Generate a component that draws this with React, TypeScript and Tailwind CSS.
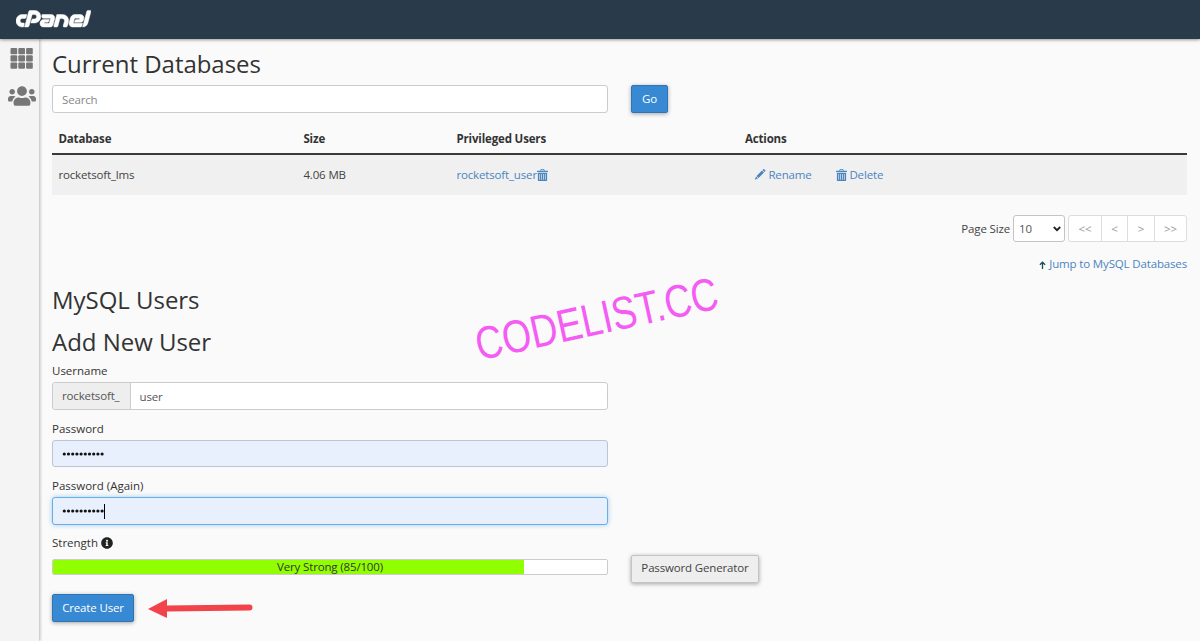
import type { ReactNode } from "react";
import { FaCpanel, FaInfoCircle, FaUsers } from "react-icons/fa";

function Trash() {
  return (
    <svg viewBox="0 0 20 22" className="inline-block h-[12px] w-[11px] shrink-0" fill="currentColor">
      <path d="M7 0h6l1 3h6v2.600H0V3h6zM8 1.500 7.500 3h5L12 1.500zM1.500 7h17v13.500a1.500 1.500 0 0 1-1.500 1.500H3a1.500 1.500 0 0 1-1.500-1.500zM4.300 9v10.500h1.200V9zm3.400 0v10.500h1.200V9zm3.400 0v10.500h1.200V9zm3.400 0v10.500h1.200V9z" fillRule="evenodd" />
    </svg>
  );
}

function Pencil() {
  return (
    <svg viewBox="0 0 22 22" className="inline-block h-[11px] w-[12px] shrink-0" fill="currentColor">
      <path d="M17.500.5a1.500 1.500 0 0 1 2 0l2 2a1.500 1.500 0 0 1 0 2L20 6l-4-4zM15 3l4 4L8 18l-4-4zM3 15l4 4-6.500 2.500z" />
    </svg>
  );
}

function Grid() {
  return (
    <svg viewBox="0 0 23 21" className="h-[21px] w-[23px]" fill="#777">
      {[0, 7.25, 14.5].map((y) =>
        [0.5, 8.3, 16.1].map((x) => <rect key={`${x}-${y}`} x={x} y={y} width="6.700" height="6.300" rx="1" />),
      )}
    </svg>
  );
}

function Heading({ children, className }: { children: ReactNode; className: string }) {
  return <h2 className={`flex h-[42px] items-center text-[24px] tracking-[-0.030px] whitespace-nowrap text-[#333] ${className}`}>{children}</h2>;
}

function Label({ children, className }: { children: ReactNode; className: string }) {
  return <div className={`flex h-[14px] items-center text-[11.500px] font-medium tracking-normal text-[#333] ${className}`}>{children}</div>;
}

function Dots() {
  return (
    <svg viewBox="0 0 42 4" className="h-[4px] w-[42px]" fill="#111">
      {Array.from({ length: 10 }, (_, i) => (
        <circle key={i} cx={2.3 + i * 4.2} cy="2" r="1.600" />
      ))}
    </svg>
  );
}

export default function App() {
  return (
    <div className="flex h-[641px] flex-col overflow-hidden bg-[#fafafa] font-['Open_Sans',sans-serif] text-[11.500px] leading-none tracking-[-0.150px] text-[#444]">
      <header className="z-10 flex h-[39px] shrink-0 items-center bg-[#293a4a] pl-[16px] shadow-[0_1px_3px_rgba(0,0,0,0.4)]">
        <FaCpanel className="mb-[1px] h-[61px] w-[75px] shrink-0 text-white" stroke="white" strokeWidth="4" />
      </header>
      <div className="flex min-h-0 flex-1">
        <aside className="flex w-[39px] shrink-0 flex-col items-end bg-[#f4f4f4] pt-[9px] shadow-[1px_0_3px_rgba(0,0,0,0.28)]">
          <div className="mr-[6px]"><Grid /></div>
          <FaUsers className="mt-[13px] mr-[3px] h-[28px] w-[28px] text-[#777]" />
        </aside>
        <main className="relative min-w-0 flex-1 pt-[4px] pr-[13px] pl-[13px]">
          <Heading className="">Current Databases</Heading>
          <div className="flex h-[28px]">
            <div className="flex w-[556px] items-center rounded-[3px] border border-[#ccc] bg-white pt-[1px] pl-[9px] text-[#888]">Search</div>
            <button className="ml-[23px] w-[37px] rounded-[2px] border border-[#2d75b5] bg-[#3789d3] tracking-[-0.150px] text-white shadow-[0_1px_4px_rgba(0,0,0,0.35)]">Go</button>
          </div>

          <div className="mt-[12px] grid h-[30px] grid-cols-[245px_153px_288.500px_1fr] items-center border-b-2 border-[#3a3a3a] pl-[6.400px] font-bold text-[#333]">
            <div>Database</div>
            <div>Size</div>
            <div>Privileged Users</div>
            <div>Actions</div>
          </div>
          <div className="grid h-[40px] grid-cols-[245px_153px_298px_1fr] items-center bg-[#f0f0f0] pb-[1px] pl-[6.400px]">
            <div>rocketsoft_lms</div>
            <div>4.06 MB</div>
            <div className="flex items-center text-[#4a85bf]">
              rocketsoft_user
              <Trash />
            </div>
            <div className="flex items-center text-[#4a85bf]">
              <Pencil />
              <span className="ml-[2px] w-[68px]">Rename</span>
              <Trash />
              <span className="ml-[2px]">Delete</span>
            </div>
          </div>

          <div className="mt-[20px] flex h-[27px] items-center justify-end text-[#444]">
            <span>Page Size</span>
            <div className="ml-[3px] flex h-[27px] w-[52px] items-center justify-between rounded-[3px] border border-[#c4c4c4] bg-white pr-[3px] pl-[5px] text-[#555]">
              10
              <svg viewBox="0 0 8 6" className="h-[6px] w-[8px]" fill="none" stroke="#222" strokeWidth="1.800">
                <path d="m.8 1 3.200 3.200L7.200 1" />
              </svg>
            </div>
            <div className="ml-[3px] flex h-[27px] w-[119px] divide-x divide-[#ddd] rounded-[3px] border border-[#ddd] bg-white text-[#999]">
              <span className="flex w-[33px] items-center justify-center">&lt;&lt;</span>
              <span className="flex w-[26px] items-center justify-center">&lt;</span>
              <span className="flex w-[27px] items-center justify-center">&gt;</span>
              <span className="flex flex-1 items-center justify-center">&gt;&gt;</span>
            </div>
          </div>
          <div className="mt-[12px] flex h-[20px] items-center justify-end text-[#4a85bf]">
            <svg viewBox="0 0 8 9" className="mt-[2px] mr-[3px] h-[8px] w-[7px]" fill="none" stroke="#17505a" strokeWidth="1.500">
              <path d="M4 9V1.500M1 4.300l3-3 3 3" />
            </svg>
            <span>Jump to MySQL Databases</span>
          </div>

          <Heading className="mt-[5px]">MySQL Users</Heading>
          <Heading className="mt-[1px] pb-[2px]">Add New User</Heading>
          <Label className="">Username</Label>
          <div className="mt-[4px] flex h-[28px] w-[556px] overflow-hidden rounded-[3px] border border-[#ccc] bg-white text-[#555]">
            <div className="flex w-[78px] items-center border-r border-[#ccc] bg-[#eee] pl-[9px]">rocketsoft_</div>
            <div className="flex items-center pt-[1px] pl-[8.500px]">user</div>
          </div>
          <Label className="mt-[11px] pt-[1px]">Password</Label>
          <div className="mt-[5px] flex h-[27px] w-[556px] items-center rounded-[3px] border border-[#bcc5d2] bg-[#e8f0fe] pl-[9px]">
            <Dots />
          </div>
          <Label className="mt-[12px]">Password (Again)</Label>
          <div className="mt-[4px] flex h-[28px] w-[556px] items-center rounded-[3px] border border-[#66afe9] bg-[#e8f0fe] pl-[9px] shadow-[0_0_5px_rgba(102,175,233,0.6)]">
            <Dots />
            <div className="h-[15px] w-px bg-black" />
          </div>
          <Label className="mt-[11px]">
            Strength
            <FaInfoCircle className="ml-[3px] h-[12px] w-[12px] text-[#222]" />
          </Label>
          <div className="mt-[5px] flex h-[28px]">
            <div className="mt-[4px] grid h-[16px] w-[556px] overflow-hidden rounded-[2px] border border-[#ccc] bg-white">
              <div className="col-start-1 row-start-1 w-[85%] bg-[#91ff00]" />
              <div className="col-start-1 row-start-1 flex items-center justify-center text-[#333]">Very Strong (85/100)</div>
            </div>
            <button className="ml-[23px] w-[128px] rounded-[2px] border border-[#c4c4c4] bg-[#eee] pb-[2px] tracking-[-0.150px] text-[#444] shadow-[0_1px_4px_rgba(0,0,0,0.35)]">Password Generator</button>
          </div>
          <button className="mt-[11px] block h-[28px] w-[82px] rounded-[2px] border border-[#2d75b5] bg-[#3789d3] pb-[1px] tracking-[-0.150px] text-white shadow-[0_1px_4px_rgba(0,0,0,0.35)]">Create User</button>

          <svg viewBox="0 0 106 20" className="absolute top-[559px] left-[109px] h-[20px] w-[106px]">
            <path d="M18 10.500 101.500 9.500" stroke="#f2434a" strokeWidth="6" strokeLinecap="round" />
            <path d="M0 11 19 1v19z" fill="#f2434a" />
          </svg>
          <svg viewBox="0 0 280 130" className="absolute top-[221px] left-[421px] h-[130px] w-[280px] overflow-visible">
            <text transform="translate(19.300 100.500) rotate(-12.300)" textLength="247" lengthAdjust="spacingAndGlyphs" className="fill-[#f45cf4] font-['Liberation_Sans',sans-serif] text-[46px] tracking-normal">CODELIST.CC</text>
          </svg>
        </main>
      </div>
    </div>
  );
}
